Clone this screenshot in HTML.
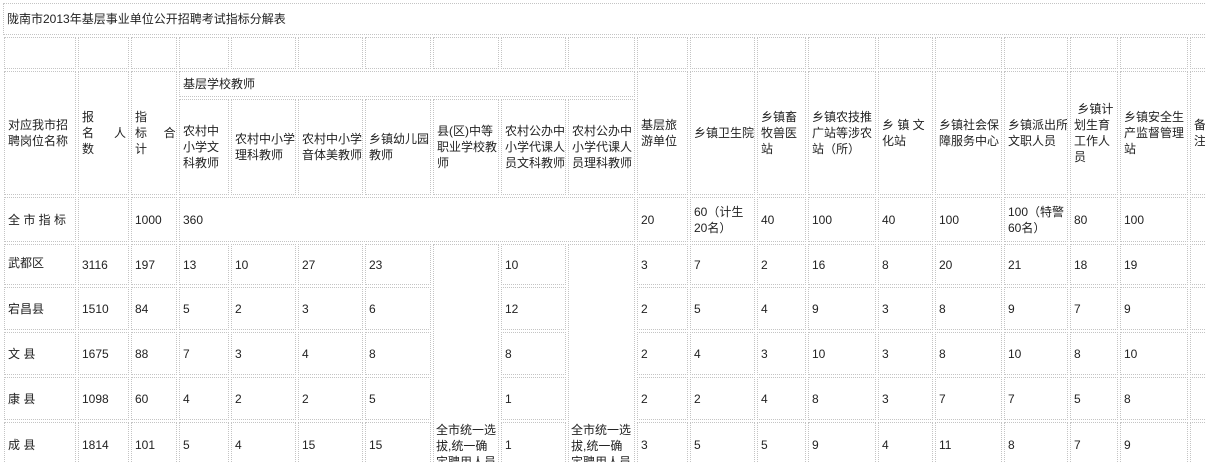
<!DOCTYPE html>
<html><head><meta charset="utf-8"><style>
html,body{margin:0;padding:0;background:#fff;width:1205px;height:462px;overflow:hidden;position:relative}
body{font-family:"Liberation Sans","Noto Sans CJK SC",sans-serif;font-size:12px;color:#222}
.c{position:absolute;box-sizing:border-box;border:1px dotted #c4c4c4;display:flex;align-items:center;padding-left:3px;line-height:16px;overflow:hidden;white-space:nowrap}
.t{position:absolute;line-height:16px;white-space:nowrap}
.b{align-items:flex-start;padding-top:14px}
</style></head><body>
<div class="c" style="left:3px;top:3px;width:1202px;height:32px;border-right:none">陇南市2013年基层事业单位公开招聘考试指标分解表</div>
<div class="c" style="left:4px;top:37px;width:72px;height:32px"></div>
<div class="c" style="left:78px;top:37px;width:51px;height:32px"></div>
<div class="c" style="left:131px;top:37px;width:46px;height:32px"></div>
<div class="c" style="left:179px;top:37px;width:50px;height:32px"></div>
<div class="c" style="left:231px;top:37px;width:65px;height:32px"></div>
<div class="c" style="left:298px;top:37px;width:65px;height:32px"></div>
<div class="c" style="left:365px;top:37px;width:66px;height:32px"></div>
<div class="c" style="left:433px;top:37px;width:66px;height:32px"></div>
<div class="c" style="left:501px;top:37px;width:65px;height:32px"></div>
<div class="c" style="left:568px;top:37px;width:67px;height:32px"></div>
<div class="c" style="left:637px;top:37px;width:51px;height:32px"></div>
<div class="c" style="left:690px;top:37px;width:65px;height:32px"></div>
<div class="c" style="left:757px;top:37px;width:49px;height:32px"></div>
<div class="c" style="left:808px;top:37px;width:68px;height:32px"></div>
<div class="c" style="left:878px;top:37px;width:55px;height:32px"></div>
<div class="c" style="left:935px;top:37px;width:67px;height:32px"></div>
<div class="c" style="left:1004px;top:37px;width:64px;height:32px"></div>
<div class="c" style="left:1070px;top:37px;width:48px;height:32px"></div>
<div class="c" style="left:1120px;top:37px;width:68px;height:32px"></div>
<div class="c" style="left:1190px;top:37px;width:15px;height:32px;border-right:none"></div>

<div class="c" style="left:4px;top:71px;width:72px;height:124px">对应我市招<br>聘岗位名称</div>
<div class="c" style="left:78px;top:71px;width:51px;height:124px">报<br>名&nbsp;&nbsp;&nbsp;&nbsp;&nbsp;&nbsp;人<br>数</div>
<div class="c" style="left:131px;top:71px;width:46px;height:124px">指<br>标&nbsp;&nbsp;&nbsp;&nbsp;&nbsp;合<br>计</div>
<div class="c" style="left:179px;top:71px;width:456px;height:26px">基层学校教师</div>
<div class="c" style="left:179px;top:99px;width:50px;height:96px">农村中<br>小学文<br>科教师</div>
<div class="c" style="left:231px;top:99px;width:65px;height:96px">农村中小学<br>理科教师</div>
<div class="c" style="left:298px;top:99px;width:65px;height:96px">农村中小学<br>音体美教师</div>
<div class="c" style="left:365px;top:99px;width:66px;height:96px">乡镇幼儿园<br>教师</div>
<div class="c" style="left:433px;top:99px;width:66px;height:96px">县(区)中等<br>职业学校教<br>师</div>
<div class="c" style="left:501px;top:99px;width:65px;height:96px">农村公办中<br>小学代课人<br>员文科教师</div>
<div class="c" style="left:568px;top:99px;width:67px;height:96px">农村公办中<br>小学代课人<br>员理科教师</div>
<div class="c" style="left:637px;top:71px;width:51px;height:124px">基层旅<br>游单位</div>
<div class="c" style="left:690px;top:71px;width:65px;height:124px">乡镇卫生院</div>
<div class="c" style="left:757px;top:71px;width:49px;height:124px">乡镇畜<br>牧兽医<br>站</div>
<div class="c" style="left:808px;top:71px;width:68px;height:124px">乡镇农技推<br>广站等涉农<br>站（所）</div>
<div class="c" style="left:878px;top:71px;width:55px;height:124px">乡&nbsp;镇&nbsp;文<br>化站</div>
<div class="c" style="left:935px;top:71px;width:67px;height:124px">乡镇社会保<br>障服务中心</div>
<div class="c" style="left:1004px;top:71px;width:64px;height:124px">乡镇派出所<br>文职人员</div>
<div class="c" style="left:1070px;top:71px;width:48px;height:124px">&nbsp;乡镇计<br>划生育<br>工作人<br>员</div>
<div class="c" style="left:1120px;top:71px;width:68px;height:124px">乡镇安全生<br>产监督管理<br>站</div>
<div class="c" style="left:1190px;top:71px;width:15px;height:124px;border-right:none">备<br>注</div>

<div class="c" style="left:4px;top:197px;width:72px;height:45px">全&nbsp;市&nbsp;指&nbsp;标</div>
<div class="c" style="left:78px;top:197px;width:51px;height:45px"></div>
<div class="c" style="left:131px;top:197px;width:46px;height:45px">1000</div>
<div class="c" style="left:179px;top:197px;width:456px;height:45px">360</div>
<div class="c" style="left:637px;top:197px;width:51px;height:45px">20</div>
<div class="c" style="left:690px;top:197px;width:65px;height:45px">60（计生<br>20名）</div>
<div class="c" style="left:757px;top:197px;width:49px;height:45px">40</div>
<div class="c" style="left:808px;top:197px;width:68px;height:45px">100</div>
<div class="c" style="left:878px;top:197px;width:55px;height:45px">40</div>
<div class="c" style="left:935px;top:197px;width:67px;height:45px">100</div>
<div class="c" style="left:1004px;top:197px;width:64px;height:45px">100（特警<br>60名）</div>
<div class="c" style="left:1070px;top:197px;width:48px;height:45px">80</div>
<div class="c" style="left:1120px;top:197px;width:68px;height:45px">100</div>
<div class="c" style="left:1190px;top:197px;width:15px;height:45px;border-right:none"></div>

<div class="c" style="left:433px;top:244px;width:66px;height:218px;border-bottom:none"></div>
<div class="c" style="left:568px;top:244px;width:67px;height:218px;border-bottom:none"></div>
<div class="t" style="left:436px;top:422px">全市统一选<br>拔,统一确<br>定聘用人员</div>
<div class="t" style="left:571px;top:422px">全市统一选<br>拔,统一确<br>定聘用人员</div>

<div class="c" style="left:4px;top:244px;width:72px;height:41px;align-items:flex-start;padding-top:10px">武都区</div>
<div class="c" style="left:78px;top:244px;width:51px;height:41px">3116</div>
<div class="c" style="left:131px;top:244px;width:46px;height:41px">197</div>
<div class="c" style="left:179px;top:244px;width:50px;height:41px">13</div>
<div class="c" style="left:231px;top:244px;width:65px;height:41px">10</div>
<div class="c" style="left:298px;top:244px;width:65px;height:41px">27</div>
<div class="c" style="left:365px;top:244px;width:66px;height:41px">23</div>
<div class="c" style="left:501px;top:244px;width:65px;height:41px">10</div>
<div class="c" style="left:637px;top:244px;width:51px;height:41px">3</div>
<div class="c" style="left:690px;top:244px;width:65px;height:41px">7</div>
<div class="c" style="left:757px;top:244px;width:49px;height:41px">2</div>
<div class="c" style="left:808px;top:244px;width:68px;height:41px">16</div>
<div class="c" style="left:878px;top:244px;width:55px;height:41px">8</div>
<div class="c" style="left:935px;top:244px;width:67px;height:41px">20</div>
<div class="c" style="left:1004px;top:244px;width:64px;height:41px">21</div>
<div class="c" style="left:1070px;top:244px;width:48px;height:41px">18</div>
<div class="c" style="left:1120px;top:244px;width:68px;height:41px">19</div>
<div class="c" style="left:1190px;top:244px;width:15px;height:41px;border-right:none"></div>

<div class="c" style="left:4px;top:287px;width:72px;height:43px">宕昌县</div>
<div class="c" style="left:78px;top:287px;width:51px;height:43px">1510</div>
<div class="c" style="left:131px;top:287px;width:46px;height:43px">84</div>
<div class="c" style="left:179px;top:287px;width:50px;height:43px">5</div>
<div class="c" style="left:231px;top:287px;width:65px;height:43px">2</div>
<div class="c" style="left:298px;top:287px;width:65px;height:43px">3</div>
<div class="c" style="left:365px;top:287px;width:66px;height:43px">6</div>
<div class="c" style="left:501px;top:287px;width:65px;height:43px">12</div>
<div class="c" style="left:637px;top:287px;width:51px;height:43px">2</div>
<div class="c" style="left:690px;top:287px;width:65px;height:43px">5</div>
<div class="c" style="left:757px;top:287px;width:49px;height:43px">4</div>
<div class="c" style="left:808px;top:287px;width:68px;height:43px">9</div>
<div class="c" style="left:878px;top:287px;width:55px;height:43px">3</div>
<div class="c" style="left:935px;top:287px;width:67px;height:43px">8</div>
<div class="c" style="left:1004px;top:287px;width:64px;height:43px">9</div>
<div class="c" style="left:1070px;top:287px;width:48px;height:43px">7</div>
<div class="c" style="left:1120px;top:287px;width:68px;height:43px">9</div>
<div class="c" style="left:1190px;top:287px;width:15px;height:43px;border-right:none"></div>

<div class="c" style="left:4px;top:332px;width:72px;height:43px">文&nbsp;县</div>
<div class="c" style="left:78px;top:332px;width:51px;height:43px">1675</div>
<div class="c" style="left:131px;top:332px;width:46px;height:43px">88</div>
<div class="c" style="left:179px;top:332px;width:50px;height:43px">7</div>
<div class="c" style="left:231px;top:332px;width:65px;height:43px">3</div>
<div class="c" style="left:298px;top:332px;width:65px;height:43px">4</div>
<div class="c" style="left:365px;top:332px;width:66px;height:43px">8</div>
<div class="c" style="left:501px;top:332px;width:65px;height:43px">8</div>
<div class="c" style="left:637px;top:332px;width:51px;height:43px">2</div>
<div class="c" style="left:690px;top:332px;width:65px;height:43px">4</div>
<div class="c" style="left:757px;top:332px;width:49px;height:43px">3</div>
<div class="c" style="left:808px;top:332px;width:68px;height:43px">10</div>
<div class="c" style="left:878px;top:332px;width:55px;height:43px">3</div>
<div class="c" style="left:935px;top:332px;width:67px;height:43px">8</div>
<div class="c" style="left:1004px;top:332px;width:64px;height:43px">10</div>
<div class="c" style="left:1070px;top:332px;width:48px;height:43px">8</div>
<div class="c" style="left:1120px;top:332px;width:68px;height:43px">10</div>
<div class="c" style="left:1190px;top:332px;width:15px;height:43px;border-right:none"></div>

<div class="c" style="left:4px;top:377px;width:72px;height:43px">康&nbsp;县</div>
<div class="c" style="left:78px;top:377px;width:51px;height:43px">1098</div>
<div class="c" style="left:131px;top:377px;width:46px;height:43px">60</div>
<div class="c" style="left:179px;top:377px;width:50px;height:43px">4</div>
<div class="c" style="left:231px;top:377px;width:65px;height:43px">2</div>
<div class="c" style="left:298px;top:377px;width:65px;height:43px">2</div>
<div class="c" style="left:365px;top:377px;width:66px;height:43px">5</div>
<div class="c" style="left:501px;top:377px;width:65px;height:43px">1</div>
<div class="c" style="left:637px;top:377px;width:51px;height:43px">2</div>
<div class="c" style="left:690px;top:377px;width:65px;height:43px">2</div>
<div class="c" style="left:757px;top:377px;width:49px;height:43px">4</div>
<div class="c" style="left:808px;top:377px;width:68px;height:43px">8</div>
<div class="c" style="left:878px;top:377px;width:55px;height:43px">3</div>
<div class="c" style="left:935px;top:377px;width:67px;height:43px">7</div>
<div class="c" style="left:1004px;top:377px;width:64px;height:43px">7</div>
<div class="c" style="left:1070px;top:377px;width:48px;height:43px">5</div>
<div class="c" style="left:1120px;top:377px;width:68px;height:43px">8</div>
<div class="c" style="left:1190px;top:377px;width:15px;height:43px;border-right:none"></div>

<div class="c b" style="left:4px;top:422px;width:72px;height:40px;border-bottom:none">成&nbsp;县</div>
<div class="c b" style="left:78px;top:422px;width:51px;height:40px;border-bottom:none">1814</div>
<div class="c b" style="left:131px;top:422px;width:46px;height:40px;border-bottom:none">101</div>
<div class="c b" style="left:179px;top:422px;width:50px;height:40px;border-bottom:none">5</div>
<div class="c b" style="left:231px;top:422px;width:65px;height:40px;border-bottom:none">4</div>
<div class="c b" style="left:298px;top:422px;width:65px;height:40px;border-bottom:none">15</div>
<div class="c b" style="left:365px;top:422px;width:66px;height:40px;border-bottom:none">15</div>
<div class="c b" style="left:501px;top:422px;width:65px;height:40px;border-bottom:none">1</div>
<div class="c b" style="left:637px;top:422px;width:51px;height:40px;border-bottom:none">3</div>
<div class="c b" style="left:690px;top:422px;width:65px;height:40px;border-bottom:none">5</div>
<div class="c b" style="left:757px;top:422px;width:49px;height:40px;border-bottom:none">5</div>
<div class="c b" style="left:808px;top:422px;width:68px;height:40px;border-bottom:none">9</div>
<div class="c b" style="left:878px;top:422px;width:55px;height:40px;border-bottom:none">4</div>
<div class="c b" style="left:935px;top:422px;width:67px;height:40px;border-bottom:none">11</div>
<div class="c b" style="left:1004px;top:422px;width:64px;height:40px;border-bottom:none">8</div>
<div class="c b" style="left:1070px;top:422px;width:48px;height:40px;border-bottom:none">7</div>
<div class="c b" style="left:1120px;top:422px;width:68px;height:40px;border-bottom:none">9</div>
<div class="c" style="left:1190px;top:422px;width:15px;height:40px;border-right:none;border-bottom:none"></div>
</body></html>
